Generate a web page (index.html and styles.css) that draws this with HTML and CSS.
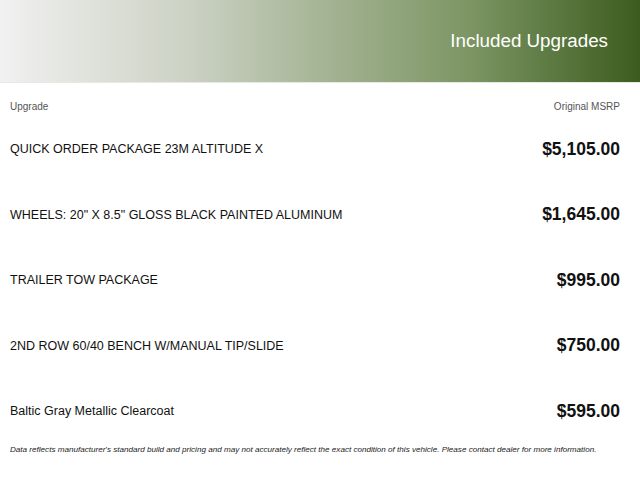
FILE: index.html
```html
<!DOCTYPE html>
<html>
<head>
<meta charset="utf-8">
<link rel="stylesheet" href="styles.css">
</head>
<body>
<header class="banner">
  <h1 class="banner-title">Included Upgrades</h1>
</header>
<main class="upgrades">
  <div class="col-heads">
    <span>Upgrade</span>
    <span>Original MSRP</span>
  </div>
  <div class="row"><span class="name">QUICK ORDER PACKAGE 23M ALTITUDE X</span><span class="price">$5,105.00</span></div>
  <div class="row"><span class="name">WHEELS: 20" X 8.5" GLOSS BLACK PAINTED ALUMINUM</span><span class="price">$1,645.00</span></div>
  <div class="row"><span class="name">TRAILER TOW PACKAGE</span><span class="price">$995.00</span></div>
  <div class="row"><span class="name">2ND ROW 60/40 BENCH W/MANUAL TIP/SLIDE</span><span class="price">$750.00</span></div>
  <div class="row"><span class="name">Baltic Gray Metallic Clearcoat</span><span class="price">$595.00</span></div>
  <p class="disclaimer">Data reflects manufacturer's standard build and pricing and may not accurately reflect the exact condition of this vehicle. Please contact dealer for more information.</p>
</main>
</body>
</html>
```

FILE: styles.css
```css
html, body {
  margin: 0;
  padding: 0;
  background: #fff;
  font-family: "Liberation Sans", Arial, sans-serif;
}
.banner {
  height: 82px;
  display: flex;
  align-items: center;
  justify-content: flex-end;
  padding-right: 32px;
  background: linear-gradient(to right, #f1f1f1 0%, #cbd1c3 30%, #a6b596 50%, #7d9664 73%, #3c5c1f 100%);
  box-shadow: 0 1px 0 #e6e9e2;
}
.banner-title {
  margin: 0;
  font-weight: normal;
  font-size: 18.8px;
  color: #fff;
}
.upgrades {
  padding: 0 20px 0 10px;
}
.col-heads {
  display: flex;
  justify-content: space-between;
  height: 34.5px;
  padding-top: 19px;
  box-sizing: border-box;
  font-size: 10px;
  line-height: 12px;
  color: #555;
}
.row {
  display: flex;
  justify-content: space-between;
  align-items: center;
  height: 65.5px;
}
.name {
  font-size: 12.5px;
  color: #111;
}
.price {
  font-size: 17.5px;
  font-weight: bold;
  color: #111;
}
.disclaimer {
  margin: 1px 0 0;
  font-size: 8.1px;
  line-height: 10px;
  font-style: italic;
  color: #222;
}
```
